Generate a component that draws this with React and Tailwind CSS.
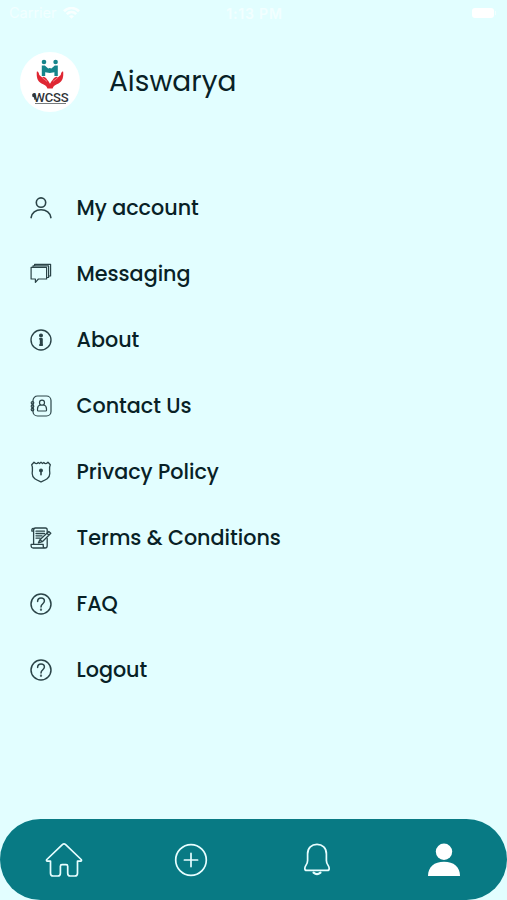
const stroke = {
  fill: 'none',
  stroke: 'currentColor',
  strokeLinecap: 'round',
  strokeLinejoin: 'round',
};

function Icon({ children, width = 1.3 }) {
  return (
    <svg className="h-[22px] w-[22px] shrink-0 overflow-visible text-[#2b4448]" viewBox="0 0 22 22" {...stroke} strokeWidth={width}>
      {children}
    </svg>
  );
}

const UserIcon = () => (
  <Icon width={1.6}>
    <circle cx="11" cy="5.6" r="4.7" />
    <path d="M1.1 20.6C1.6 15.8 5.8 12.7 11 12.7S20.4 15.8 20.9 20.6" />
  </Icon>
);

const MessageIcon = () => (
  <Icon width={1.2}>
    <path d="M1.1 4.4H16.6V16H8.4L5.4 19.4V16H1.1Z" />
    <path d="M3 4.2V2.9H18.6V14.5H16.8M4.6 2.7V1.3H20.6V13H18.8" />
  </Icon>
);

const InfoIcon = () => (
  <Icon width={1.4}>
    <circle cx="11" cy="11" r="10" />
    <circle cx="11" cy="6.4" r="1.3" fill="currentColor" />
    <path d="M9.9 9.8H11.9V15.6M9.9 16H12.2M10.7 9.8V15.6" strokeWidth="1.8" />
  </Icon>
);

const ContactIcon = () => (
  <Icon width={1.2}>
    <rect x="3" y="1" width="18" height="20" rx="4.5" />
    <circle cx="12" cy="7.7" r="2.5" />
    <path d="M10.4 9.8C8.4 10.4 7.5 12 7.5 14V15.2Q7.5 16 8.3 16H15.7Q16.5 16 16.5 15.2V14C16.5 12 15.6 10.4 13.6 9.8" />
    <circle cx="2.5" cy="7.8" r="1.3" />
    <circle cx="2.5" cy="11.2" r="1.3" />
    <circle cx="2.5" cy="14.6" r="1.3" />
  </Icon>
);

const ShieldIcon = () => (
  <Icon width={1.3}>
    <path d="M4 1.2C5.2 3 7 3.1 8.2 1.5L9.6 2.5 11 1.1 12.4 2.5 13.8 1.5C15 3.1 16.8 3 18 1.2L20.3 3.8C18.6 6.6 19.8 9.2 19.8 12.4C19.8 17.6 15 19.2 11 20.8C7 19.2 2.2 17.6 2.2 12.4C2.2 9.2 3.4 6.6 1.7 3.8Z" />
    <circle cx="11" cy="9.4" r="1.3" fill="currentColor" />
    <path d="M11 10.4V13.8" strokeWidth="1.6" />
  </Icon>
);

const TermsIcon = () => (
  <Icon width={1.3}>
    <path d="M3.6 17V3.2Q3.6 1 5.4 1H15.4Q17.2 1 17.2 3V5.5M17.2 11.5V18.8Q17.2 21 15 21H3.2Q1.1 21 1.1 18.6V17.4H13.2V18.8Q13.2 21 15 21" />
    <path d="M3.4 1.3Q1.5 1.5 1.9 4.2H3.5M6 4.2H14.5M6 6.5H14.5M6 8.8H12M6 11.1H10.2" />
    <path d="M18.8 4.4L20.8 6.2 12.3 14.7 8.4 15.8 9.9 12.7ZM10.4 13L12 14.5M17 6.4L19 8.1" />
  </Icon>
);

const HelpIcon = () => (
  <Icon width={1.5}>
    <circle cx="11" cy="11" r="10" />
    <path d="M7.6 8.4C7.7 6.3 9.1 5.1 11 5.1S14.4 6.3 14.4 8.1C14.4 10.8 11 10.7 11 14" />
    <circle cx="11" cy="16.7" r=".4" />
  </Icon>
);

const items = [
  { label: 'My account', icon: UserIcon },
  { label: 'Messaging', icon: MessageIcon },
  { label: 'About', icon: InfoIcon },
  { label: 'Contact Us', icon: ContactIcon },
  { label: 'Privacy Policy', icon: ShieldIcon },
  { label: 'Terms & Conditions', icon: TermsIcon },
  { label: 'FAQ', icon: HelpIcon },
  { label: 'Logout', icon: HelpIcon },
];

function StatusBar() {
  return (
    <header className="grid h-[26px] grid-cols-3 items-center pr-[11px] pl-[9px] font-['Inter',sans-serif] text-[14px] text-[#f2ffff]">
      <div className="flex items-center gap-[6px]">
        <span className="text-[14.5px]">Carrier</span>
        <svg className="h-3 w-[17px]" viewBox="0 0 17 12" fill="none" stroke="#f8ffff" strokeWidth="2.6">
          <path d="M1 4.2C5.3 0 11.7 0 16 4.2M3.8 7.1C6.5 4.5 10.5 4.5 13.2 7.1" />
          <path d="M8.5 11.8L6 9.3Q8.5 7.2 11 9.3Z" fill="#f8ffff" stroke="none" />
        </svg>
      </div>
      <span className="pl-1 text-center font-semibold tracking-[0.8px]">1:13 PM</span>
      <div className="flex items-center justify-end gap-px">
        <div className="h-[10px] w-[22px] rounded-[3px] bg-white" />
        <div className="h-1 w-px bg-[#f2ffff]" />
      </div>
    </header>
  );
}

function Logo() {
  return (
    <div className="flex h-[60px] w-[60px] flex-col items-center rounded-full bg-white pt-[7px]">
      <svg className="h-[31px] w-[28px]" viewBox="0 0 28 31">
        <g fill="#16858b">
          <circle cx="8" cy="3" r="2.3" />
          <circle cx="19.6" cy="3" r="2.3" />
          <path d="M5.8 6.4H8.8L12.2 9.6 13.8 9 15.4 9.6 18.8 6.4H21.8V17H18.4V13.2L13.8 14 9.2 13.2V17H5.8Z" />
        </g>
        <path
          fill="#df2733"
          d="M.8 12.8C1.9 12 2.8 13.6 3.3 16L6.2 18.6C6.7 16.8 9.6 18.1 11.4 20.9C12.7 22.4 13.4 23.6 14 24.7C14.6 23.6 15.3 22.4 16.6 20.9C18.4 18.1 21.3 16.8 21.8 18.6L24.7 16C25.2 13.6 26.1 12 27.2 12.8C27.6 18.4 26.6 22.3 22.5 24.6C19.3 26 17.4 27 16.6 29.5H11.4C10.6 27 8.7 26 5.5 24.6C1.4 22.3 .4 18.4 .8 12.8Z"
        />
        <path d="M6.2 18.6L11 22.4M21.8 18.6L17 22.4" stroke="#fff" strokeWidth=".4" />
      </svg>
      <div className="mt-[2px] flex h-[11px] items-center font-['Roboto',sans-serif] text-[13px] leading-none font-medium tracking-[-0.2px] text-[#303438]">
        <svg className="mr-[-2px] mb-[3px] h-[7px] w-[4px]" viewBox="0 0 4 8" fill="#303438">
          <path d="M0 1L2 0 4 2V7L2.5 8 2 5 0 4Z" />
        </svg>
        <span>WCSS</span>
      </div>
      <div className="h-px w-[31px] bg-[#777b7d]" />
    </div>
  );
}

function BottomNav() {
  return (
    <nav className="grid h-[81px] grid-cols-4 items-center justify-items-center rounded-[41px] bg-[#087a84] pl-px text-[#e7feff]">
      <svg className="h-9 w-[38px]" viewBox="0 0 38 36" {...stroke} strokeWidth="1.7">
        <path d="M1.8 17.5L17.6 2.4Q19 1.2 20.4 2.4L36.2 17.5Q37.1 18.9 35.5 19.1H32.5V31.2Q32.5 34 29.7 34H25.3Q22.7 34 22.7 31.2V24.2Q22.7 22.6 21.1 22.6H17Q15.4 22.6 15.4 24.2V31.2Q15.4 34 12.7 34H8.2Q5.5 34 5.5 31.2V19.1H2.5Q.9 18.9 1.8 17.5Z" />
      </svg>
      <svg className="h-[34px] w-[34px]" viewBox="0 0 34 34" {...stroke} strokeWidth="1.7">
        <circle cx="17" cy="17" r="15.3" />
        <path d="M17 10.4V23.6M10.4 17H23.6" />
      </svg>
      <svg className="h-[34px] w-[28px]" viewBox="0 0 28 34" {...stroke} strokeWidth="1.7">
        <path d="M4.6 11C4.6 5 8.6 1.4 14 1.4S23.4 5 23.4 11V17.5C23.4 21.6 26.2 22.4 26.2 25.4Q26.2 27.4 24.3 27.4H3.7Q1.8 27.4 1.8 25.4C1.8 22.4 4.6 21.6 4.6 17.5Z" />
        <path d="M10.6 29.6Q14 32.6 17.4 29.6" strokeWidth="2.2" />
      </svg>
      <svg className="h-[34px] w-8" viewBox="0 0 32 34" fill="#fff">
        <circle cx="16" cy="8.7" r="8.2" />
        <path d="M0 33C0 24 6.2 18.8 16 18.8S32 24 32 33Z" />
      </svg>
    </nav>
  );
}

export default function App() {
  return (
    <div className="flex h-[900px] w-[507px] flex-col overflow-hidden bg-[#e2feff] font-['Poppins','Inter',sans-serif] text-[#082126]">
      <StatusBar />
      <section className="mt-[26px] ml-5 flex h-[60px] items-center gap-[29px]">
        <Logo />
        <h1 className="text-[28px] leading-[60px]">Aiswarya</h1>
      </section>
      <ul className="mt-[63px] flex flex-col">
        {items.map(({ label, icon: Glyph }) => (
          <li key={label} className="flex h-[66px] items-center gap-[24.5px] pl-[30px]">
            <Glyph />
            <span className="text-[20.7px] leading-8 font-medium whitespace-nowrap">{label}</span>
          </li>
        ))}
      </ul>
      <div className="mt-auto">
        <BottomNav />
      </div>
    </div>
  );
}
